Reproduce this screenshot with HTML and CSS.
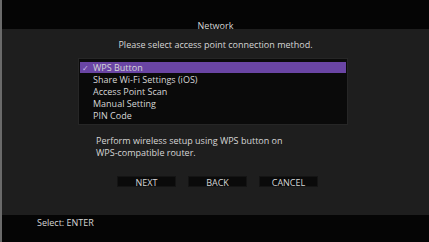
FILE: index.html
```html
<!DOCTYPE html>
<html>
<head>
<meta charset="utf-8">
<link rel="stylesheet" href="styles.css">
</head>
<body>
<div class="screen">
  <header class="top"><span class="title">Network</span></header>
  <main class="body">
    <p class="prompt">Please select access point connection method.</p>
    <ul class="list">
      <li class="item sel"><span class="check">✓</span>WPS Button</li>
      <li class="item">Share Wi-Fi Settings (iOS)</li>
      <li class="item">Access Point Scan</li>
      <li class="item">Manual Setting</li>
      <li class="item">PIN Code</li>
    </ul>
    <p class="desc">Perform wireless setup using WPS button on<br>WPS-compatible router.</p>
    <div class="buttons">
      <span class="btn">NEXT</span>
      <span class="btn">BACK</span>
      <span class="btn">CANCEL</span>
    </div>
  </main>
  <footer class="bottom">Select: ENTER</footer>
</div>
</body>
</html>
```
FILE: styles.css
```css
* { box-sizing: border-box; }
html, body { margin: 0; padding: 0; background: #050505; }
.screen {
  width: 429px; height: 242px;
  display: flex; flex-direction: column;
  font-family: "Open Sans", "DejaVu Sans", sans-serif;
  font-size: 9px; color: #d6d6d6;
  border-left: 2px solid #6a6a6a;
}
.top {
  height: 29px; flex: none; background: #050505;
  display: flex; align-items: flex-start; justify-content: center;
  padding-top: 19px;
}
.title { line-height: 14px; }
.body {
  flex: 1; background: #1e1e1e;
  display: flex; flex-direction: column; align-items: center;
}
.prompt { margin: 10px 0 0; line-height: 12px; }
.list {
  list-style: none; margin: 7px 0 0; padding: 3px 1px 2px;
  width: 270px; background: #0a0a0a; border: 1px solid #262626;
  align-self: flex-start; margin-left: 76px;
}
.item { height: 12px; line-height: 12px; padding-left: 13px; position: relative; }
.item.sel { background: #6a45a4; height: 11px; line-height: 11px; margin-bottom: 1px; }
.check { position: absolute; left: 2px; top: 0; font-size: 8px; color: #c9b8e6; }
.desc {
  margin: 10px 0 0; line-height: 12px; align-self: flex-start; margin-left: 94px;
}
.buttons { display: flex; gap: 12px; margin-top: 17px; margin-left: 4px; }
.btn {
  width: 59px; height: 11px; line-height: 11px; background: #0a0a0a;
  text-align: center; border: 1px solid #141414;
}
.bottom {
  height: 27px; flex: none; background: #050505; padding: 2px 0 0 35px; line-height: 12px;
}
```
